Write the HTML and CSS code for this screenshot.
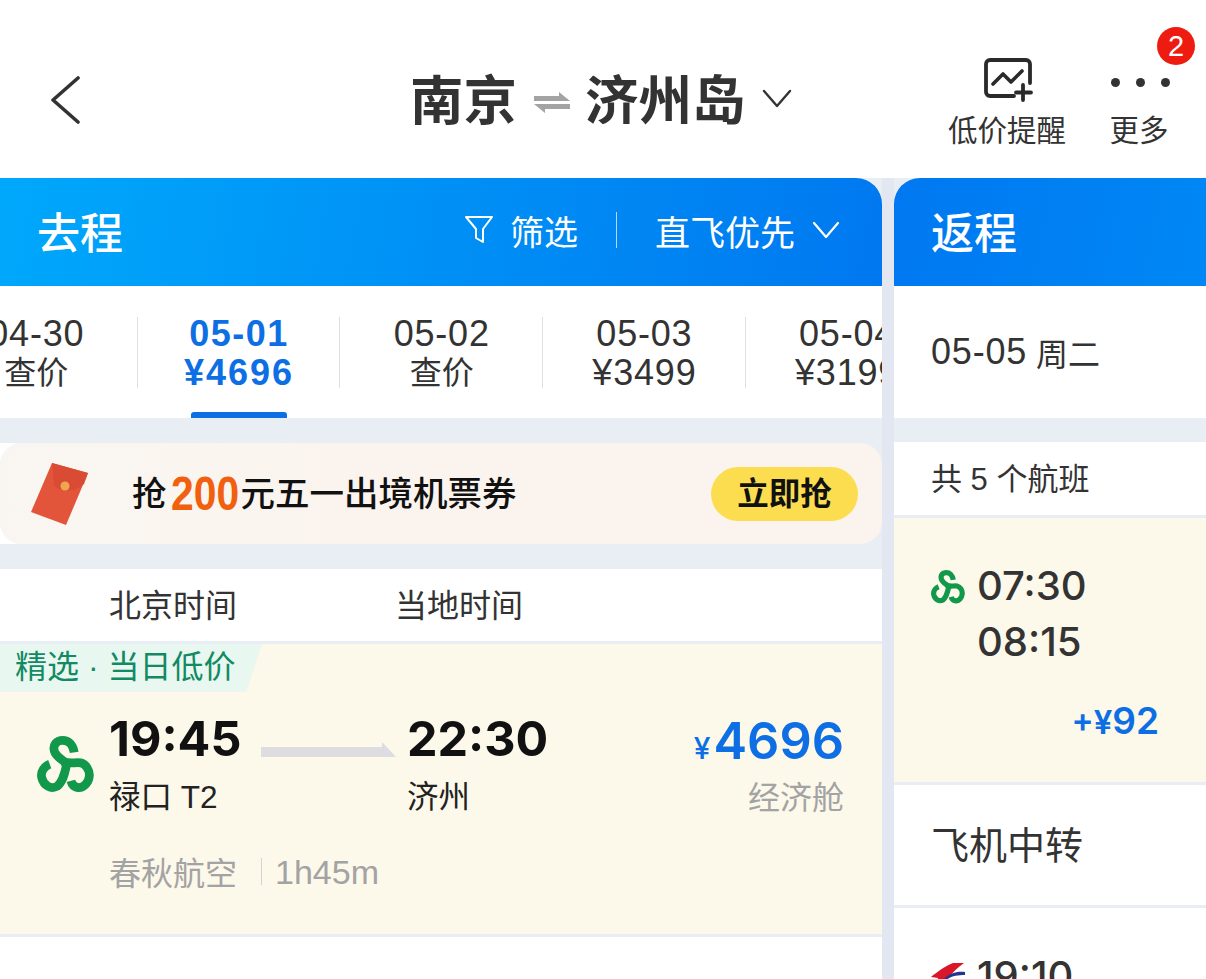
FILE: index.html
```html
<!DOCTYPE html>
<html lang="zh-CN">
<head>
    <meta charset="UTF-8">
    <title>南京 - 济州岛</title>
    <link rel="stylesheet" href="styles.css">
</head>
<body>
    <svg class="defs" width="0" height="0">
        <symbol id="spring" viewBox="0 0 170 170">
            <g fill="none" stroke="#12984a" stroke-width="26">
                <path d="M111 49C107 24 92 13 77 13C58 13 46 27 52 46C58 64 74 70 90 82"/>
                <path d="M76 76C96 84 112 78 130 80C146 84 158 102 156 120C154 140 138 156 122 154C110 152 104 146 101 134"/>
                <path d="M90 78C84 104 80 134 60 150C42 160 20 148 14 124C10 106 22 90 38 84"/>
            </g>
        </symbol>
    </svg>

    <header class="top">
        <svg class="back" width="30" height="48" viewBox="0 0 30 48">
            <path d="M28 2L3 24L28 46" fill="none" stroke="#333" stroke-width="3.6" stroke-linecap="round" stroke-linejoin="round"/>
        </svg>
        <div class="route">
            <span>南京</span>
            <svg class="swap" width="36" height="21" viewBox="0 0 36 21">
                <path d="M0 4H25V0L36 9H0Z" fill="#a3a3a3"/>
                <path d="M36 12H0L11 21V17H36Z" fill="#a3a3a3"/>
            </svg>
            <span>济州岛</span>
            <svg class="route-arrow" width="30" height="20" viewBox="0 0 30 20">
                <path d="M2 2L15 17L28 2" fill="none" stroke="#333" stroke-width="2.4" stroke-linecap="round" stroke-linejoin="round"/>
            </svg>
        </div>
        <div class="actions">
            <div class="action">
                <svg class="alert-icon" width="50" height="44" viewBox="0 0 50 44">
                    <path d="M30 38H6A4 4 0 0 1 2 34V6A4 4 0 0 1 6 2H42A4 4 0 0 1 46 6V25" fill="none" stroke="#2a2a2a" stroke-width="3.800" stroke-linecap="round"/>
                    <path d="M9 26L19 16L27 24L38 13" fill="none" stroke="#2a2a2a" stroke-width="3.600" stroke-linecap="round" stroke-linejoin="round"/>
                    <path d="M39 27V42M32 34.500H47" fill="none" stroke="#2a2a2a" stroke-width="3.800" stroke-linecap="round"/>
                </svg>
                <span>低价提醒</span>
            </div>
            <div class="action action-more">
                <em class="badge">2</em>
                <div class="dots"><i></i><i></i><i></i></div>
                <span>更多</span>
            </div>
        </div>
    </header>

    <main class="columns">
        <section class="col">
            <div class="col-head">
                <h2>去程</h2>
                <div class="tools">
                    <svg width="30" height="30" viewBox="0 0 30 30">
                        <path d="M2 2H28L19 14V27L12 23V14Z" fill="none" stroke="#fff" stroke-width="2" stroke-linejoin="round"/>
                    </svg>
                    <span class="filter">筛选</span>
                    <i class="tool-line"></i>
                    <span class="sort">直飞优先</span>
                    <svg width="28" height="18" viewBox="0 0 28 18">
                        <path d="M2 2L14 16L26 2" fill="none" stroke="#fff" stroke-width="2.200" stroke-linecap="round" stroke-linejoin="round"/>
                    </svg>
                </div>
            </div>

            <div class="dates">
                <div class="date"><b>04-30</b>查价</div>
                <div class="date date-on"><b>05-01</b><span class="date-price">¥4696</span></div>
                <div class="date"><b>05-02</b>查价</div>
                <div class="date"><b>05-03</b><span class="date-price">¥3499</span></div>
                <div class="date"><b>05-04</b><span class="date-price">¥3199</span></div>
            </div>

            <div class="banner">
                <svg class="packet" width="60" height="64" viewBox="0 0 60 64">
                    <path d="M22 1L58 11L36 63L1 50Z" fill="#e2553a"/>
                    <path d="M22 1L58 11L54 22C44 30 34 31 24 24Z" fill="#d94c33"/>
                    <circle cx="35" cy="24" r="4.500" fill="#f0a64e"/>
                </svg>
                <p class="banner-text">抢<strong>200</strong>元五一出境机票券</p>
                <span class="banner-btn">立即抢</span>
            </div>

            <div class="zone-head">
                <span>北京时间</span>
                <span>当地时间</span>
            </div>

            <article class="flight">
                <div class="flight-tag">精选 · 当日低价</div>
                <div class="flight-main">
                    <svg class="logo"><use href="#spring"/></svg>
                    <div class="stop stop-from">
                        <div class="clock">19:45</div>
                        <div class="place">禄口 T2</div>
                    </div>
                    <svg class="flight-arrow" width="135" height="16" viewBox="0 0 135 16">
                        <path d="M0 5H121V0L135 15H0Z" fill="#dcdce1"/>
                    </svg>
                    <div class="stop">
                        <div class="clock">22:30</div>
                        <div class="place">济州</div>
                    </div>
                    <div class="fare">
                        <div class="fare-price"><small>¥</small>4696</div>
                        <div class="fare-class">经济舱</div>
                    </div>
                </div>
                <div class="flight-sub">
                    <span>春秋航空</span>
                    <span class="duration">1h45m</span>
                </div>
            </article>
            <div class="flight-next"></div>
        </section>

        <section class="col">
            <div class="col-head">
                <h2>返程</h2>
            </div>

            <div class="dates dates-back"><b>05-05</b> 周二</div>

            <div class="count">共 5 个航班</div>

            <article class="mini mini-on">
                <div class="mini-times">
                    <svg class="mini-logo"><use href="#spring"/></svg>
                    <div>07:30<br>08:15</div>
                </div>
                <div class="mini-price"><small>+¥</small>92</div>
            </article>

            <div class="transfer">飞机中转</div>

            <article class="mini">
                <div class="mini-times">
                    <svg class="mini-logo" viewBox="0 0 34 34">
                        <path d="M33 3H22C14 6 6 12 0 17L7 18L4 30H12C14 20 22 11 33 3Z" fill="#d8172b"/>
                        <path d="M34 12C26 11 18 13 12 20L15 20C20 16 27 15 34 15Z" fill="#23358f"/>
                    </svg>
                    <div>19:10</div>
                </div>
            </article>
        </section>
    </main>
</body>
</html>
```

FILE: styles.css
```css
* {
    box-sizing: border-box;
}
html, body {
    margin: 0;
    height: 979px;
    overflow: hidden;
}
body {
    background: #fff;
    color: #333;
    font-family: "Liberation Sans", "Noto Sans CJK SC", sans-serif;
}
.defs {
    display: block;
    height: 0;
}

/* top bar */
.top {
    display: flex;
    height: 178px;
    padding-left: 50px;
    background: #fff;
}
.back {
    margin-top: 76px;
}
.route {
    display: flex;
    align-items: center;
    height: 60px;
    margin: 72px 0 0 330px;
    font-size: 53.500px;
    font-weight: 700;
    line-height: 60px;
    color: #333;
}
.swap {
    margin: 0 15px 0 17px;
}
.route-arrow {
    margin: -6px 0 0 16px;
}
.actions {
    display: flex;
    gap: 43px;
    margin-left: 156.500px;
    padding-top: 58px;
}
.action {
    position: relative;
    display: flex;
    flex-direction: column;
    align-items: center;
    font-size: 29.500px;
    line-height: 36px;
}
.action span {
    margin-top: 11px;
}
.alert-icon {
    margin-left: 3px;
}
.action-more {
    width: 60px;
}
.dots {
    display: flex;
    justify-content: space-between;
    align-items: center;
    width: 60px;
    height: 44px;
    padding: 4px 1px 0 0;
    margin-left: 4px;
}
.dots i {
    width: 9px;
    height: 9px;
    border-radius: 50%;
    background: #333;
}
.badge {
    position: absolute;
    top: -31px;
    right: -26px;
    width: 38px;
    height: 38px;
    border-radius: 50%;
    background: #ee1c10;
    color: #fff;
    font-size: 29px;
    font-style: normal;
    line-height: 38px;
    text-align: center;
}

/* two columns */
.columns {
    display: grid;
    grid-template-columns: 882px 312px;
    gap: 12px;
    height: 801px;
    background: #e3e7f1;
}
.col {
    overflow: hidden;
    background: #e9edf4;
}
.col-head {
    display: flex;
    align-items: center;
    height: 108px;
    padding: 0 42px 4px 37px;
    border-radius: 0 26px 0 0;
    background: linear-gradient(100deg, #00a8fb, #0078f0);
    color: #fff;
}
.col + .col .col-head {
    padding-left: 37px;
    border-radius: 26px 0 0 0;
    background: linear-gradient(100deg, #0078f1, #0087f5);
}
.col-head h2 {
    margin: 0;
    font-size: 43px;
    font-weight: 500;
}
.tools {
    display: flex;
    align-items: center;
    margin-left: auto;
    font-size: 34px;
}
.filter {
    margin-left: 16px;
}
.tool-line {
    width: 1px;
    height: 36px;
    margin: 0 38px;
    background: rgba(255, 255, 255, 0.7);
}
.sort {
    margin-right: 17px;
    font-size: 35px;
}

/* dates */
.dates {
    display: flex;
    height: 132px;
    background: #fff;
    overflow: hidden;
}
.date {
    position: relative;
    flex: 0 0 202.700px;
    padding-top: 27px;
    font-size: 32px;
    line-height: 40px;
    text-align: center;
    white-space: nowrap;
}
.date:first-child {
    margin-left: -65px;
}
.date b {
    display: block;
    margin-top: 1px;
    font-size: 36px;
    font-weight: 400;
    line-height: 39px;
    letter-spacing: 0.800px;
}
.date-price {
    font-size: 36px;
    letter-spacing: 0.800px;
}
.date::after {
    content: "";
    position: absolute;
    top: 31px;
    right: 0;
    width: 1px;
    height: 71px;
    background: #dcdfe4;
}
.date-on {
    color: #0d6fe3;
    font-weight: 700;
}
.date-on b {
    font-weight: 700;
    letter-spacing: 1.500px;
}
.date-on .date-price {
    letter-spacing: 2px;
}
.date-on::before {
    content: "";
    position: absolute;
    bottom: 0;
    left: 53px;
    width: 96px;
    height: 6px;
    border-radius: 3px 3px 0 0;
    background: #0d6fe3;
}
.dates-back {
    align-items: center;
    gap: 9px;
    padding-left: 37px;
    font-size: 32px;
}
.dates-back b {
    font-size: 36px;
    font-weight: 400;
    letter-spacing: 0.800px;
}

/* banner */
.banner {
    display: flex;
    align-items: center;
    height: 101px;
    margin-top: 25px;
    padding: 0 24px 0 30px;
    border-radius: 22px;
    background: linear-gradient(90deg, #f9f6f1, #fbf4ee 40%, #fbf4ee);
    box-shadow: -30px 0 0 #fff;
}
.banner-text {
    margin: 0 0 0 42px;
    color: #111;
    font-size: 34.500px;
    font-weight: 500;
    line-height: 50px;
}
.banner-text strong {
    display: inline-block;
    margin: 0 -10px 0 4px;
    color: #f1600f;
    font-family: "Liberation Sans", sans-serif;
    font-size: 48px;
    line-height: 50px;
    vertical-align: top;
    transform: scaleX(0.85);
    transform-origin: 0 50%;
}
.banner-btn {
    width: 147px;
    height: 54px;
    margin-left: auto;
    border-radius: 27px;
    background: #fbdd4f;
    color: #111;
    font-size: 31.500px;
    font-weight: 700;
    line-height: 54px;
    text-align: center;
}

/* flight list */
.zone-head {
    display: flex;
    gap: 158px;
    height: 72px;
    margin-top: 25px;
    padding-left: 109px;
    background: #fff;
    font-size: 32px;
    line-height: 74px;
}
.flight {
    height: 290px;
    margin-top: 3px;
    background: #fcf8ea;
}
.flight-tag {
    width: 262px;
    height: 48px;
    padding-left: 15px;
    background: #e9f7f1;
    clip-path: polygon(0 0, 100% 0, 94% 100%, 0 100%);
    color: #128a63;
    font-size: 32px;
    line-height: 46px;
    white-space: nowrap;
}
.flight-main {
    display: flex;
    height: 125px;
    padding: 19px 38px 0 37px;
}
.logo {
    width: 57px;
    height: 57px;
    margin: 25px 15px 0 0;
}
.stop-from {
    width: 152px;
}
.clock {
    color: #111;
    font-family: Inter, sans-serif;
    font-size: 48.500px;
    font-weight: 700;
    line-height: 56px;
}
.place {
    margin-top: 10px;
    color: #222;
    font-size: 31.500px;
    line-height: 40px;
}
.flight-arrow {
    margin: 31px 11px 0 0;
}
.fare {
    margin-left: auto;
    text-align: right;
}
.fare-price {
    color: #0d6fe3;
    font-family: Inter, sans-serif;
    font-size: 50.500px;
    font-weight: 600;
    line-height: 60px;
}
.fare-price small {
    margin-right: 3px;
    font-size: 30px;
    font-weight: 500;
}
.fare-class {
    margin-top: 0;
    color: #a3a3a3;
    font-size: 32px;
    line-height: 40px;
}
.flight-sub {
    display: flex;
    align-items: center;
    height: 40px;
    margin-top: 34px;
    padding-left: 109px;
    color: #a3a3a3;
    font-size: 32px;
}
.duration {
    height: 27px;
    margin-left: 24px;
    padding-left: 13px;
    border-left: 1px solid #d3d3d3;
    font-size: 34px;
    line-height: 29px;
}
.flight-next {
    height: 60px;
    margin-top: 3px;
    background: #fff;
}

/* return column */
.count {
    height: 73px;
    margin-top: 24px;
    padding-left: 37px;
    background: #fff;
    font-size: 31px;
    line-height: 75px;
}
.mini {
    height: 200px;
    margin-top: 3px;
    padding: 40px 47px 0 37px;
    background: #fff;
}
.mini-on {
    height: 264px;
    background: #fcf8ea;
}
.mini-times {
    display: flex;
    gap: 12px;
    color: #333;
    font-family: Inter, sans-serif;
    font-size: 40px;
    font-weight: 500;
    line-height: 56px;
}
.mini-logo {
    flex: none;
    width: 34px;
    height: 34px;
    margin-top: 12px;
}
.mini-price {
    margin-top: 26px;
    color: #0d6fe3;
    font-family: Inter, sans-serif;
    font-size: 37px;
    font-weight: 600;
    line-height: 50px;
    text-align: right;
}
.mini-price small {
    font-size: 33px;
}
.transfer {
    height: 120px;
    margin-top: 3px;
    padding-left: 37px;
    background: #fff;
    font-size: 38px;
    line-height: 122px;
}
```
